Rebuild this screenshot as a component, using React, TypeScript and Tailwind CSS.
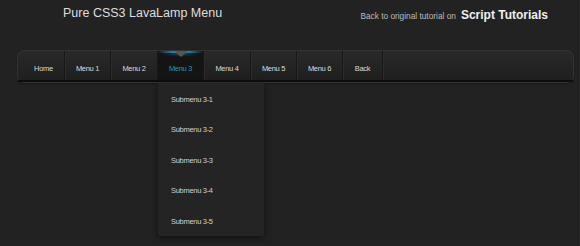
import React from 'react';

const items = [
  { label: 'Home', w: 'w-[47px]', pad: 'pl-[5px]' },
  { label: 'Menu 1', w: 'w-[46px]', pad: '' },
  { label: 'Menu 2', w: 'w-[47px]', pad: '' },
  { label: 'Menu 3', w: 'w-[46px]', pad: '', active: true },
  { label: 'Menu 4', w: 'w-[47px]', pad: '' },
  { label: 'Menu 5', w: 'w-[46px]', pad: '' },
  { label: 'Menu 6', w: 'w-[46px]', pad: '' },
  { label: 'Back', w: 'w-[40px]', pad: '' },
];

const submenu = ['Submenu 3-1', 'Submenu 3-2', 'Submenu 3-3', 'Submenu 3-4', 'Submenu 3-5'];

export default function App() {
  return (
    <div className="w-[580px] h-[246px] overflow-hidden bg-[#222222] border-r border-[#2b2b2b] font-['Liberation_Sans',Arial,sans-serif]">
      {/* header */}
      <div className="flex justify-between h-[50px]">
        <h1 className="pl-[63px] pt-[7px] text-[12.5px] leading-none font-normal text-[#dedede]">
          Pure CSS3 LavaLamp Menu
        </h1>
        <div className="flex items-baseline gap-[5px] pr-[31px] pt-[9px] leading-none">
          <span className="text-[8.3px] text-[#bdbdbd]">Back to original tutorial on</span>
          <span className="text-[12px] font-bold text-[#f0f0f0]">Script Tutorials</span>
        </div>
      </div>

      {/* nav */}
      <div className="ml-[17px] mr-[5px] h-[33px] rounded-[7px] border border-[#333333] bg-gradient-to-b from-[#292929] to-[#1e1e1e] shadow-[0_1px_2px_rgba(0,0,0,0.4)]">
        <div className="h-full flex flex-col">
          <ul className="flex h-[30px]">
            {items.map((it) => (
              <li
                key={it.label}
                className={`relative ${it.w} ${it.pad} h-full flex justify-center pt-[14px] border-r border-[#171717] shadow-[1px_0_0_#2b2b2b] text-[7.5px] leading-none tracking-[-0.3px] ${
                  it.active ? 'bg-[#141414] text-[#2393cf]' : 'text-[#dadada]'
                } ${it.label === 'Home' ? 'rounded-tl-[6px]' : ''}`}
              >
                {it.label}
                {it.active && (
                  <>
                    <div className="absolute left-0 right-0 top-0 h-[2px] bg-gradient-to-r from-transparent via-[#33bdf5] to-transparent" />
                    <div className="absolute left-[4px] right-[4px] top-[1px] h-[3px] bg-gradient-to-r from-transparent via-[#1c6f99]/70 to-transparent blur-[1px]" />
                    <div className="absolute top-0 left-1/2 -translate-x-1/2 w-0 h-0 border-l-[7px] border-r-[7px] border-t-[6px] border-l-transparent border-r-transparent border-t-[#555555]" />
                    <div className="absolute left-0 top-[32px] w-[106px] h-[153px] bg-[#242424] shadow-[0_2px_6px_rgba(0,0,0,0.55)] rounded-b-[2px] z-10">
                      {submenu.map((s) => (
                        <div
                          key={s}
                          className="h-[30.6px] pl-[13px] pt-[12.6px] text-[7.5px] leading-none tracking-[-0.3px] text-[#d0d0d0]"
                        >
                          {s}
                        </div>
                      ))}
                    </div>
                  </>
                )}
              </li>
            ))}
          </ul>
          <div className="h-[2px] bg-[#0d0d0d]" />
        </div>
      </div>
    </div>
  );
}
